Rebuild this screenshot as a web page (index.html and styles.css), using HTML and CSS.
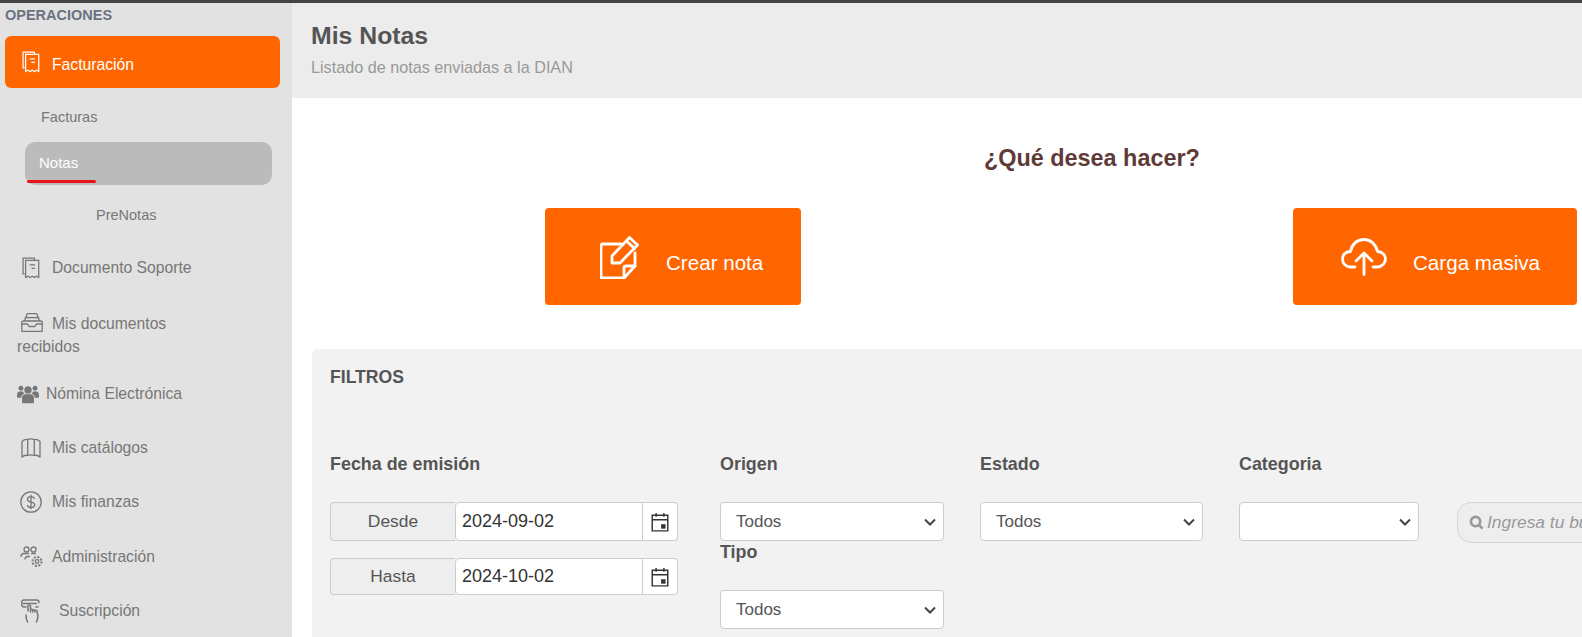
FILE: index.html
```html
<!DOCTYPE html>
<html lang="es">
<head>
<meta charset="utf-8">
<title>Mis Notas</title>
<link rel="stylesheet" href="styles.css">
</head>
<body>
<div class="topbar"></div>
<div class="app">
  <aside class="sidebar">
    <div class="section-title">OPERACIONES</div>
    <a class="nav-item nav-active">
      <svg class="ico" viewBox="0 0 20 24" fill="none" stroke="currentColor" stroke-width="1.4"><path d="M3 18.500H1.200V1h12.600v2.500"/><path d="M4 3.600h14.600v18.900l-2.400-1.400-2.400 1.400-2.400-1.400-2.400 1.400-2.400-1.400L4 22.500z"/><path d="M8.500 8.500h6M10.500 12.500h4"/></svg>
      <span>Facturación</span>
    </a>
    <a class="sub-item sub-facturas">Facturas</a>
    <a class="sub-item sub-notas">Notas<span class="underline"></span></a>
    <a class="sub-item sub-prenotas">PreNotas</a>
    <a class="nav-item nav-doc">
      <svg class="ico" viewBox="0 0 20 24" fill="none" stroke="currentColor" stroke-width="1.4"><path d="M3 18.500H1.200V1h12.600v2.500"/><path d="M4 3.600h14.600v18.900l-2.400-1.400-2.400 1.400-2.400-1.400-2.400 1.400-2.400-1.400L4 22.500z"/><path d="M8.500 8.500h6M10.500 12.500h4"/></svg>
      <span>Documento Soporte</span>
    </a>
    <a class="nav-item nav-wrap">
      <svg class="ico-inbox" viewBox="0 0 22 19" fill="none" stroke="currentColor" stroke-width="1.300" stroke-linejoin="round"><path d="M3.500 8 6 1.200c.2-.4.5-.6 1-.6h8c.5 0 .8.2 1 .6L18.500 8"/><path d="M3.800 4.600h14.400"/><path d="M.8 9.500c0-.8.5-1.500 1.500-1.500h17.400c1 0 1.500.7 1.500 1.500v8.800H.8z"/><path d="M.8 11h5.700l1.500 2.500h6l1.500-2.500h5.700"/></svg><span class="wrap-first">Mis documentos</span>
      <span class="wrap-second">recibidos</span>
    </a>
    <a class="nav-item nav-nomina">
      <svg class="ico-users" viewBox="0 0 24 20" fill="currentColor"><circle cx="12" cy="5.500" r="4"/><circle cx="4.300" cy="3.800" r="2.700"/><circle cx="19.700" cy="3.800" r="2.700"/><path d="M5.500 20v-6c0-2.500 2-3.800 3.500-3.800h6c1.500 0 3.500 1.300 3.500 3.800v6z"/><path d="M0 11c0-2.500 1.200-3.800 3-3.800h3.500c.3 1 1 2 1.800 2.600-2 .6-3.600 2-3.800 4.200H1c-.6 0-1-.4-1-1zM24 11c0-2.500-1.200-3.800-3-3.800h-3.500c-.3 1-1 2-1.800 2.600 2 .6 3.600 2 3.800 4.200h3.500c.6 0 1-.4 1-1z"/></svg>
      <span>Nómina Electrónica</span>
    </a>
    <a class="nav-item nav-plain">
      <svg class="ico ico-map" viewBox="0 0 20 20" fill="none" stroke="currentColor" stroke-width="1.300" stroke-linejoin="round"><path d="M1 3.500C3 1.500 5 1 6.700 1.500c1.500-.8 4-.8 6.600 0C15 1 17 1.500 19 3.500V19c-2-1.800-4-2-5.700-1.500-2.600-.8-5.100-.8-6.600 0C5 17 3 17.200 1 19z"/><path d="M6.700 1.500v16M13.300 1.500v16"/></svg>
      <span>Mis catálogos</span>
    </a>
    <a class="nav-item nav-plain">
      <svg class="ico ico-dollar" viewBox="0 0 22 22" fill="none" stroke="currentColor" stroke-width="1.300"><circle cx="11" cy="11" r="10.200"/><path d="M14.500 7.800C14 6.300 12.500 5.700 11 5.700c-2 0-3.500 1-3.500 2.700 0 3.800 7.200 1.500 7.200 5.300 0 1.700-1.700 2.700-3.700 2.700-1.700 0-3.200-.6-3.700-2.200M11 3.800v14.400"/></svg>
      <span>Mis finanzas</span>
    </a>
    <a class="nav-item nav-plain nav-admin">
      <svg class="ico ico-admin" viewBox="0 0 24 22" fill="none" stroke="currentColor" stroke-width="1.300"><circle cx="6.500" cy="3.500" r="2.500"/><circle cx="13.500" cy="3.500" r="2.500"/><path d="M1 11c0-2.500 1.500-3.500 3-3.500h5M5 13.500c0-2 1.500-3 3-3h2M11 7.500h5"/><circle cx="17" cy="15.500" r="1.800"/><circle cx="17" cy="15.500" r="4.500" stroke-width="2" stroke-dasharray="2 1.500"/></svg>
      <span>Administración</span>
    </a>
    <a class="nav-item nav-suscripcion">
      <svg class="ico ico-hand" viewBox="0 0 20 24" fill="none" stroke="currentColor" stroke-width="1.500" stroke-linecap="round"><path d="M5 8H2.500C1 8 .8 6.500 .8 5V3.500C.8 2 1.500 1 3 1h12.500c1.500 0 2.500 1 2.500 2.500"/><path d="M2.500 4.500h13M17 8h-2"/><path d="M7 12V7c0-1.500 2.500-1.500 2.500 0v6M9.500 11c0-1 2.200-1 2.200 0v2M11.700 11.500c0-1 2.200-1 2.200 0v1.500M13.900 12c0-1 2.300-1 2.300 0v3"/><path d="M5 16c0 3 .5 5 1.500 7M17 15.500c0 3-.5 5.500-1.500 7.500"/></svg>
      <span>Suscripción</span>
    </a>
  </aside>
  <main class="main">
    <header class="page-header">
      <h1>Mis Notas</h1>
      <p>Listado de notas enviadas a la DIAN</p>
    </header>
    <h2 class="question">¿Qué desea hacer?</h2>
    <div class="actions">
      <button class="action action-create" type="button">
        <svg class="action-ico" viewBox="0 0 40 44" fill="none" stroke="#fff" stroke-width="2.800" stroke-linejoin="round" stroke-linecap="round"><path d="M21 9H2.500C1.600 9 1 9.600 1 10.500v31c0 .9.600 1.500 1.500 1.500H24l11-12V18"/><path d="M35 31H26c-1.200 0-2 .8-2 2v10"/><path d="M12 28v-7L29.500 2.500l8 7.500L20 28z"/><path d="m26.500 6 8 7.500"/></svg>
        <span class="action-label">Crear nota</span>
      </button>
      <button class="action action-upload" type="button">
        <svg class="action-ico-cloud" viewBox="0 0 46 38" fill="none" stroke="#fff" stroke-width="2.800" stroke-linecap="round" stroke-linejoin="round"><path d="M14 29H10C5 29 1.500 25.500 1.500 21S5 13.500 9.500 13.500c1-7 6.500-12 13.500-12s12 5 13.500 12C41 13.500 44.500 17 44.500 21S41 29 36 29h-4"/><path d="M23 36.500V16M15 23l8-8 8 8"/></svg>
        <span class="action-label">Carga masiva</span>
      </button>
    </div>
    <section class="filters">
      <h3 class="filters-title">FILTROS</h3>
      <div class="filters-row">
        <div class="col col-date">
          <label class="flabel">Fecha de emisión</label>
          <div class="date-group">
            <span class="addon">Desde</span>
            <input class="date-input" type="text" value="2024-09-02">
            <span class="cal"><svg viewBox="0 0 16 18" fill="none" stroke="#333" stroke-width="1.300"><path d="M1 3h14v14H1zM1 7h14M4.500 .8v3.500M11.500 .8v3.500"/><path d="M9 11h4v4H9z" fill="#333" stroke="none"/></svg></span>
          </div>
          <div class="date-group date-group-2">
            <span class="addon">Hasta</span>
            <input class="date-input" type="text" value="2024-10-02">
            <span class="cal"><svg viewBox="0 0 16 18" fill="none" stroke="#333" stroke-width="1.300"><path d="M1 3h14v14H1zM1 7h14M4.500 .8v3.500M11.500 .8v3.500"/><path d="M9 11h4v4H9z" fill="#333" stroke="none"/></svg></span>
          </div>
        </div>
        <div class="col col-origen">
          <label class="flabel">Origen</label>
          <select class="sel"><option>Todos</option></select>
          <label class="flabel flabel-tipo">Tipo</label>
          <select class="sel"><option>Todos</option></select>
        </div>
        <div class="col col-estado">
          <label class="flabel">Estado</label>
          <select class="sel"><option>Todos</option></select>
        </div>
        <div class="col col-cat">
          <label class="flabel">Categoria</label>
          <select class="sel"><option></option></select>
        </div>
        <div class="search">
          <svg viewBox="0 0 16 16" fill="none" stroke="#999" stroke-width="2.800"><circle cx="7" cy="7" r="5"/><path d="m10.500 10.500 4 4"/></svg>
          <span>Ingresa tu búsqueda</span>
        </div>
      </div>
    </section>
  </main>
</div>
</body>
</html>
```
FILE: styles.css
```css
* { box-sizing: border-box; }
html, body { margin: 0; padding: 0; height: 637px; overflow: hidden; background: #fff; }
body { font-family: "Liberation Sans", Arial, sans-serif; color: #555; }
.topbar { height: 3px; background: #444; }
.app { display: flex; height: 634px; }

.sidebar { width: 292px; flex: none; background: #e2e2e2; padding: 5px 0 0 5px; overflow: hidden; }
.section-title { font-size: 14.500px; font-weight: 700; color: #6b7280; line-height: 14px; height: 28px; }
.nav-item { display: flex; align-items: center; color: #777; font-size: 15.700px; }
.ico { width: 18px; height: 22px; margin-left: 17px; margin-right: 12px; flex: none; }
.nav-active { width: 275px; height: 52px; background: #f60; color: #fff; border-radius: 6px; padding-top: 5px; }
.nav-active .ico { margin-top: -5px; }
.sub-item { display: block; font-size: 14.500px; color: #777; }
.sub-facturas { margin: 20px 0 0 36px; line-height: 18px; }
.sub-notas { position: relative; width: 247px; height: 43px; margin: 16px 0 0 20px; padding-left: 14px; font-size: 15px; line-height: 41px; background: #bbb; color: #fff; border-radius: 10px; }
.underline { position: absolute; left: 2px; top: 38px; width: 69px; height: 3px; background: #e8141c; border-radius: 2px; }
.sub-prenotas { margin: 21px 0 0 91px; line-height: 18px; }
.nav-doc { height: 24px; margin-top: 32px; }
.nav-wrap { display: block; height: 50px; margin-top: 32px; line-height: 23px; }
.ico-inbox { display: inline-block; width: 22px; height: 19px; margin: 0 9px 0 16px; vertical-align: -3px; }
.wrap-first { display: inline-block; }
.wrap-second { display: block; margin-left: 12px; }
.nav-nomina { height: 24px; margin-top: 20px; }
.ico-users { width: 22px; height: 20px; margin: 0 7px 0 12px; flex: none; }
.nav-plain { height: 24px; margin-top: 30px; }
.ico-map { width: 20px; height: 20px; margin-left: 16px; margin-right: 11px; }
.ico-dollar { width: 22px; height: 22px; margin-left: 15px; margin-right: 10px; }
.ico-admin { width: 24px; height: 22px; margin-left: 15px; margin-right: 8px; }
.nav-admin { margin-top: 31px; }
.nav-suscripcion { height: 24px; margin-top: 30px; }
.ico-hand { width: 20px; height: 24px; margin-left: 16px; margin-right: 18px; }

.main { flex: 1; min-width: 0; overflow: hidden; }
.page-header { height: 95px; background: #ececec; padding: 19px 0 0 19px; }
.page-header h1 { margin: 0; font-size: 24.800px; line-height: 28px; font-weight: 700; color: #555; }
.page-header p { margin: 8px 0 0; font-size: 16.200px; line-height: 18px; color: #999; }
.question { margin: 44px 0 0; height: 33px; padding-left: 692px; font-size: 23.400px; line-height: 33px; font-weight: 700; color: #5e3a38; white-space: nowrap; }
.actions { display: flex; margin: 33px 0 0 253px; gap: 492px; }
.action { display: flex; align-items: center; height: 97px; border: 0; border-radius: 4px; background: #f60; color: #fff; font-family: inherit; font-size: 20.600px; padding: 0; }
.action-label { padding-top: 12px; }
.action-create { width: 256px; }
.action-upload { width: 284px; }
.action-ico { width: 40px; height: 44px; margin: 0 26px 0 55px; flex: none; }
.action-ico-cloud { width: 46px; height: 38px; margin: 0 26px 0 48px; flex: none; }

.filters { height: 320px; margin: 44px 0 0 20px; background: #f2f2f2; border-radius: 5px 0 0 0; padding: 19px 0 0 18px; }
.filters-title { margin: 0; font-size: 17.600px; line-height: 18px; font-weight: 700; color: #555; }
.filters-row { display: flex; align-items: flex-start; margin-top: 69px; }
.col { flex: none; }
.col-date { width: 348px; margin-right: 42px; }
.col-origen { width: 224px; margin-right: 36px; }
.col-estado { width: 223px; margin-right: 36px; }
.col-cat { width: 180px; margin-right: 38px; }
.flabel { display: block; font-size: 17.900px; line-height: 18px; font-weight: 700; color: #555; margin-bottom: 29px; }
.flabel-tipo { margin-top: 1px; margin-bottom: 28px; line-height: 20px; }
.sel { display: block; width: 100%; height: 39px; appearance: none; background: #fff url("data:image/svg+xml,%3Csvg xmlns='http://www.w3.org/2000/svg' width='12' height='8'%3E%3Cpath d='M1 1.500l5 5 5-5' fill='none' stroke='%23444' stroke-width='2'/%3E%3C/svg%3E") no-repeat right 7px center; border: 1px solid #ccc; border-radius: 4px; font-family: inherit; font-size: 17px; color: #555; padding: 0 12px 0 15px; }
.date-group { display: flex; height: 39px; }
.date-group-2 { margin-top: 17px; height: 37px; }
.addon { display: flex; align-items: center; justify-content: center; width: 125px; background: #eee; border: 1px solid #ccc; border-right: 0; border-radius: 4px 0 0 4px; font-size: 17.400px; color: #555; }
.date-input { width: 188px; min-width: 0; height: 100%; background: #fff; border: 1px solid #ccc; border-radius: 4px 0 0 4px; font-family: inherit; font-size: 18px; color: #333; padding: 0 6px; }
.cal { display: flex; align-items: center; justify-content: center; width: 35px; background: #fff; border: 1px solid #ccc; border-left: 0; border-radius: 0 4px 4px 0; }
.cal svg { width: 18px; height: 20px; }
.search { display: flex; align-items: center; flex: none; width: 320px; height: 41px; margin-top: 47px; background: #eee; border: 1px solid #d5d5d5; border-radius: 14px; padding-left: 11px; gap: 3px; font-size: 17.400px; font-style: italic; color: #999; white-space: nowrap; }
.search svg { width: 15px; height: 15px; flex: none; }
```
